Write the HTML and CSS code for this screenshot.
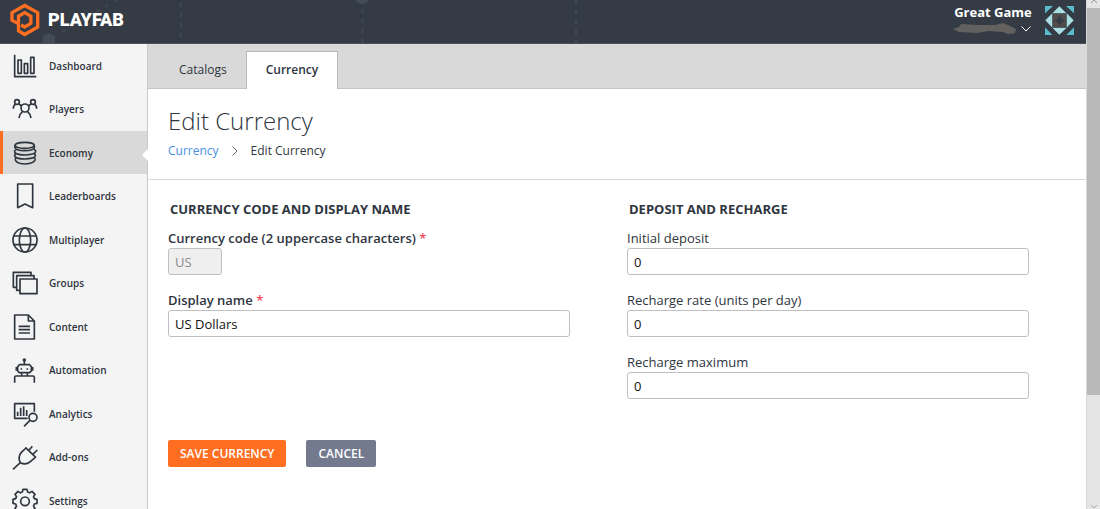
FILE: index.html
```html
<!DOCTYPE html>
<html lang="en">
<head>
<meta charset="utf-8">
<title>Edit Currency - PlayFab</title>
<link rel="stylesheet" href="styles.css">
</head>
<body>
<div class="window">
  <div class="app">
    <header class="topbar">
      <svg class="pattern" width="700" height="43" viewBox="0 0 700 43" aria-hidden="true">
        <path class="dash" d="M181 3V43M362.500 9V43M576 0V43M62 32L120 -2"/>
        <path class="hex" d="M49 33l6 3v8H43v-8zM355 0h14l-3 3-4 1-4-1z"/>
      </svg>
      <a class="brand" href="#">
        <svg width="30" height="34" viewBox="28 9 92 103" aria-hidden="true"><path d="M56 73L34 61V38L73 16L113 38V82L73 105L54 94V49L73 38L92 49V71L73 82L62 76" fill="none" stroke="#ff6e21" stroke-width="10"/></svg>
        <span>PLAYFAB</span>
      </a>
      <button class="account" type="button">
        <span class="account-text">
          <span class="game">Great Game</span>
          <span class="user">
            <svg width="64" height="12" viewBox="0 0 64 12" aria-hidden="true"><path d="M0 6L6 4 8 1 24 2 42 2 50 0 57 3 63 6 62 10 55 11 50 9 36 8 24 10 6 9z" fill="#62615f"/></svg>
            <svg width="10" height="6" viewBox="0 0 10 6" aria-hidden="true"><path d="M.5 .5L5 5 9.500 .5" fill="none" stroke="#fff"/></svg>
          </span>
        </span>
        <svg width="29" height="29" viewBox="0 0 87 87" aria-hidden="true">
          <path fill="#58bccb" d="M0 0H24L0 22zM87 0H63L87 22zM0 87V64L22 87zM87 87H64L87 64z"/>
          <path fill="#a9dfe2" d="M43 1L64 22H22zM86 43L65 65V22zM43 86L22 65H65zM1 43L22 22V65z"/>
          <path fill="#4f4d4b" d="M23 23H64V64H23z"/>
          <path fill="#353c45" d="M46 26L48 38 60 44 49 49 43 61 38 49 26 43 38 38z"/>
        </svg>
      </button>
    </header>
    <div class="body">
      <nav class="sidebar" aria-label="Main">
        <a class="item" href="#"><svg viewBox="0 0 78 78"><path d="M8 5V71H73M18 21h10v40H18zM37 32h10v29H37zM56 13h10v48H56z"/></svg>Dashboard</a>
        <a class="item" href="#"><svg viewBox="0 0 78 78"><circle cx="15" cy="18" r="7"/><circle cx="63" cy="18" r="7"/><circle cx="39" cy="36" r="12"/><path d="M4 38Q4 28 11 25M20 24L29 29M74 38Q74 28 67 25M58 24L49 29M21 66Q23 53 32 46M57 66Q55 53 46 46"/></svg>Players</a>
        <a class="item active" href="#" aria-current="page"><svg viewBox="0 0 78 78"><ellipse cx="38" cy="16" rx="29" ry="9"/><path d="M9 16V23Q11 32 38 32T67 23V16M13 28Q5 33 9 38Q16 45 41 45Q70 43 71 35Q72 31 66 28M11 41Q6 45 9 50Q16 57 38 57Q68 56 70 48Q71 44 67 40M12 53Q8 57 11 62Q17 72 40 72Q66 70 69 60Q70 55 66 52"/></svg>Economy</a>
        <a class="item" href="#"><svg viewBox="0 0 78 78"><path d="M17 3H62V74L39 63 17 74z"/></svg>Leaderboards</a>
        <a class="item" href="#"><svg viewBox="0 0 78 78"><circle cx="39" cy="39" r="36"/><ellipse cx="39" cy="39" rx="17" ry="36"/><path d="M5 27H73M5 53H73"/></svg>Multiplayer</a>
        <a class="item" href="#"><svg viewBox="0 0 78 78"><path d="M24 27H75V71H24zM24 61H14V17H66V27M14 52H4V7H57V17"/></svg>Groups</a>
        <a class="item" href="#"><svg viewBox="0 0 78 78"><path d="M8 3H49L67 21V75H8zM49 3V21H67M20 37H54M20 47H54M20 57H54"/></svg>Content</a>
        <a class="item" href="#"><svg viewBox="0 0 78 78"><circle cx="37" cy="9" r="3"/><path d="M37 11V23M22 23H53L58 29V42L53 47H22L17 42V29zM13 30V41M62 30V41M29 47V57M46 47V57M8 77V61Q8 57 12 57H63Q67 57 67 61V77M28 34v4M46 34v4"/></svg>Automation</a>
        <a class="item" href="#"><svg viewBox="0 0 78 78"><path d="M47 52H8V8H67V32M17 32V45M26 20V45M35 16V45M44 27V45M54 58L36 76"/><circle cx="63" cy="49" r="12"/></svg>Analytics</a>
        <a class="item" href="#"><svg viewBox="0 0 78 78"><path d="M3 76L25 56M40 10L72 41M42 12L28 25Q16 39 25 56Q41 65 55 53L70 40M51 19L61 7M62 31L76 18"/></svg>Add-ons</a>
        <a class="item" href="#"><svg viewBox="0 0 78 78"><path transform="translate(39 40)" d="M-8-28L-6-36H6L8-28 14-25.500 21-30 30-21 25.500-14 28-8 36-6V6L28 8 25.500 14 30 21 21 30 14 25.500 8 28 6 36H-6L-8 28-14 25.500-21 30-30 21-25.500 14-28 8-36 6V-6L-28-8-25.500-14-30-21-21-30-14-25.500z"/><circle cx="39" cy="40" r="13"/></svg>Settings</a>
      </nav>
      <main class="main">
        <nav class="tabs" aria-label="Economy">
          <a class="tab" href="#">Catalogs</a>
          <a class="tab selected" href="#" aria-current="page">Currency</a>
        </nav>
        <div class="heading">
          <h1>Edit Currency</h1>
          <div class="crumbs">
            <a href="#">Currency</a>
            <svg width="6" height="10" viewBox="0 0 6 10" aria-hidden="true"><path d="M.5 .5L5 5 .5 9.500" fill="none" stroke="#6b6f75"/></svg>
            <span>Edit Currency</span>
          </div>
        </div>
        <form class="form">
          <div class="columns">
            <section>
              <h2>CURRENCY CODE AND DISPLAY NAME</h2>
              <div class="field required">
                <label for="code">Currency code (2 uppercase characters) <span class="star">*</span></label>
                <input class="short" id="code" type="text" value="US" disabled>
              </div>
              <div class="field required">
                <label for="name">Display name <span class="star">*</span></label>
                <input id="name" type="text" value="US Dollars">
              </div>
            </section>
            <section>
              <h2>DEPOSIT AND RECHARGE</h2>
              <div class="field">
                <label for="deposit">Initial deposit</label>
                <input id="deposit" type="text" value="0">
              </div>
              <div class="field">
                <label for="rate">Recharge rate (units per day)</label>
                <input id="rate" type="text" value="0">
              </div>
              <div class="field">
                <label for="max">Recharge maximum</label>
                <input id="max" type="text" value="0">
              </div>
            </section>
          </div>
          <div class="actions">
            <button class="btn save" type="button">SAVE CURRENCY</button>
            <button class="btn cancel" type="button">CANCEL</button>
          </div>
        </form>
      </main>
    </div>
  </div>
  <div class="scrollbar" aria-hidden="true">
    <svg width="8" height="7" viewBox="0 0 8 7"><path d="M1 3L4 0 7 3" fill="none" stroke="#999"/></svg>
    <div class="thumb"></div>
    <svg width="8" height="5" viewBox="0 0 8 5"><path d="M1 1L4 4 7 1" fill="none" stroke="#aaa"/></svg>
  </div>
</div>
</body>
</html>
```
FILE: styles.css
```css
* { box-sizing: border-box; }
body {
  margin: 0;
  font-family: "Open Sans", "Noto Sans", sans-serif;
  font-size: 13px;
  line-height: 18px;
  color: #2f353e;
  background: #fff;
}
a { color: inherit; text-decoration: none; }
h1, h2 { margin: 0; }
button, input { font: inherit; }

.window { display: flex; height: 100vh; overflow: hidden; }
.app { flex: 1; min-width: 0; display: flex; flex-direction: column; }

.topbar {
  position: relative;
  flex: none;
  display: flex;
  justify-content: space-between;
  align-items: center;
  height: 44px;
  padding: 0 12px 3px 10px;
  background: #343b45;
  border-bottom: 1px solid #4c505c;
  overflow: hidden;
}
.pattern { position: absolute; left: 0; top: 0; }
.dash { fill: none; stroke: #404852; stroke-width: 2; stroke-dasharray: 4 6; }
.hex { fill: #434b55; }
.brand {
  position: relative;
  display: flex;
  align-items: center;
  gap: 8px;
  font: 900 18px/20px Roboto, sans-serif;
  color: #fff;
}
.account {
  position: relative;
  display: flex;
  align-items: center;
  gap: 12px;
  padding: 0;
  border: 0;
  background: none;
  color: #fff;
}
.account-text { display: flex; flex-direction: column; }
.game { font-weight: 700; line-height: 18px; }
.user { display: flex; align-items: center; justify-content: flex-end; gap: 4px; height: 16px; padding-right: 2px; }

.body { flex: 1; min-height: 0; display: flex; }
.sidebar {
  flex: none;
  width: 148px;
  background: #f4f4f4;
  border-right: 1px solid #c8c8c8;
}
.item {
  position: relative;
  display: flex;
  align-items: center;
  gap: 11px;
  height: 43px;
  padding-left: 12px;
  font-size: 10px;
  font-weight: 600;
}
.item:nth-child(even) { height: 44px; }
.item svg {
  width: 26px;
  height: 26px;
  fill: none;
  stroke: #2f353e;
  stroke-width: 5;
  stroke-linejoin: round;
}
.item.active { background: #d9d9d9; box-shadow: inset 3px 0 #ff6e21; }
.item.active::after {
  content: "";
  position: absolute;
  right: -1px;
  top: 18px;
  border: 6px solid transparent;
  border-left: 0;
  border-right-color: #fff;
}

.main { flex: 1; min-width: 0; }
.tabs {
  display: flex;
  align-items: flex-end;
  height: 45px;
  padding-left: 11px;
  background: #d9d9d9;
  border-bottom: 1px solid #c4c4c4;
  font-size: 12px;
}
.tab { height: 36px; padding: 9px 19px 0 20px; }
.tab.selected {
  height: 38px;
  margin-bottom: -1px;
  padding: 9px 19px 0;
  font-weight: 600;
  background: #fff;
  border: 1px solid #b8b8b8;
  border-bottom: 0;
}
.heading { padding: 15px 20px 19px; border-bottom: 1px solid #d9d9d9; }
h1 { font-size: 24px; font-weight: 300; line-height: 34px; }
.crumbs {
  display: flex;
  align-items: center;
  gap: 13px;
  margin-top: 4px;
  font-size: 12px;
}
.crumbs a { color: #4a90e2; }

.form { padding-left: 20px; }
.columns { display: grid; grid-template-columns: 1fr 1fr; padding-top: 19px; }
.columns section { padding-right: 57px; }
h2 { padding-left: 2px; font-size: 13px; font-weight: 700; line-height: 20px; }
.field { margin: 9px 0 14px; }
.field + .field { margin-top: 0; padding-top: 1px; }
.field label { display: block; line-height: 20px; }
.field.required label { font-weight: 600; }
.star { color: #f2495c; }
.field input {
  display: block;
  width: 100%;
  height: 27px;
  padding: 0 6px;
  color: #111;
  background: #fff;
  border: 1px solid #c0c0c0;
  border-radius: 3px;
}
.field .short { width: 54px; color: #8a8a8a; background: #efefef; }
.actions { display: flex; gap: 20px; padding-top: 27px; }
.btn {
  height: 27px;
  padding: 0 12px;
  border: 0;
  border-radius: 2px;
  font-size: 12px;
  font-weight: 600;
  color: #fff;
}
.save { background: #ff6e21; }
.cancel { background: #747a8e; }

.scrollbar {
  flex: none;
  display: flex;
  flex-direction: column;
  align-items: center;
  width: 14px;
  background: #e5e5e5;
  border-left: 1px solid #d8d8d8;
}
.scrollbar svg:last-child { margin-top: auto; }
.thumb { width: 100%; height: 76%; margin-top: 1px; background: #b9b9b9; flex: none; }
```
